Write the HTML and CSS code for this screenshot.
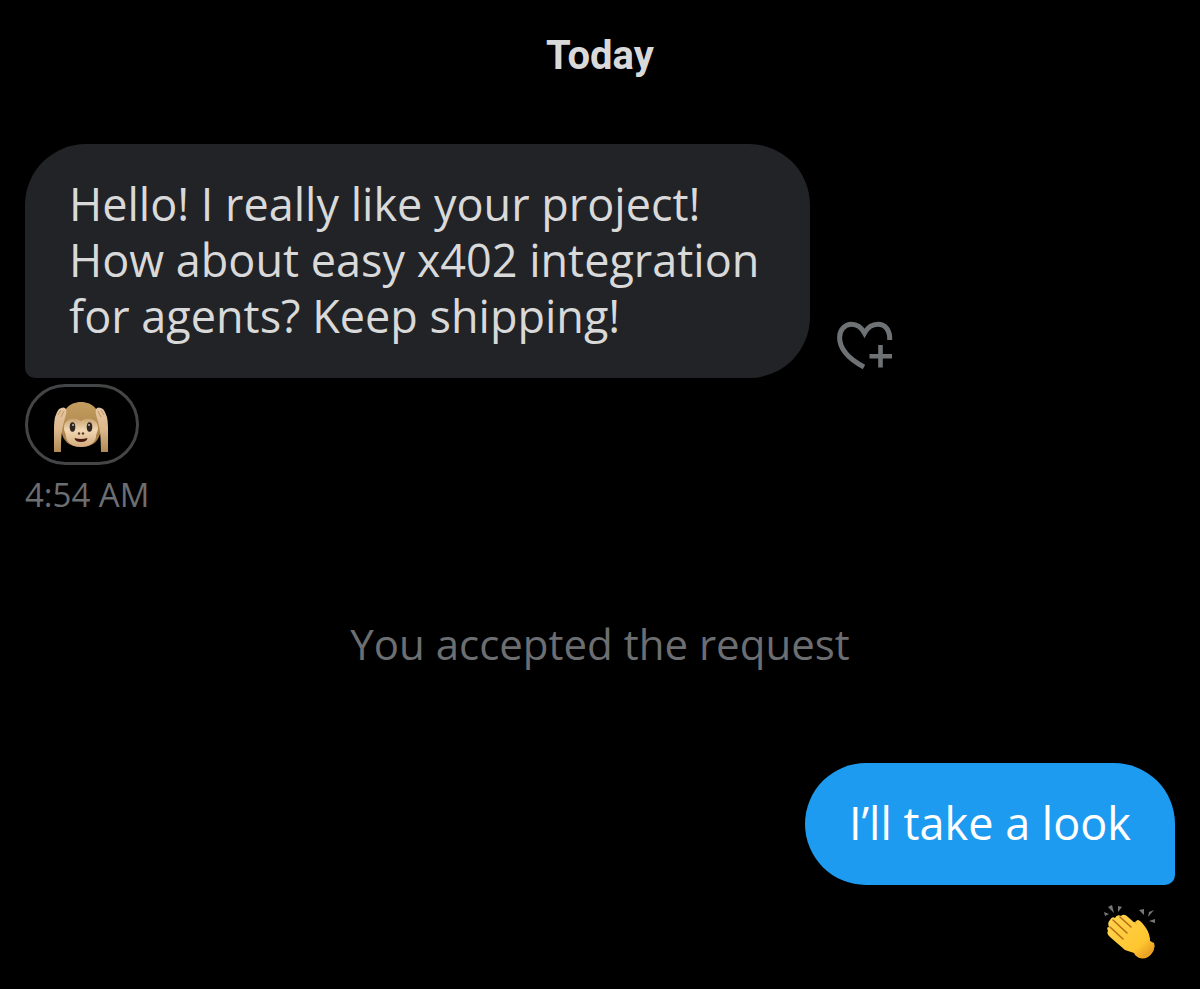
FILE: index.html
```html
<!DOCTYPE html>
<html lang="en">

<head>
<title>Messages</title>
<meta charset="UTF-8">
<meta name="viewport" content="width=device-width, initial-scale=1">
<link rel="stylesheet" href="styles.css">
</head>

<body>
<main class="chat">
  <h1 class="day">Today</h1>

  <section class="message received">
    <div class="row">
      <p class="bubble">Hello! I really like your project! How about easy x402 integration for agents? Keep shipping!</p>
      <button class="react" type="button" aria-label="Add reaction">
        <svg width="56" height="50" viewBox="0 0 56 50" fill="none" stroke="currentColor">
          <path stroke-width="5" d="M52.7 19C53.2 9 48 3.2 41 3.2C35 3.2 30.5 6.5 27.5 12C24.5 6.5 20 3.2 14.5 3.2C7.5 3.2 2.6 9 2.6 16.5C2.6 28 11 37.500 27 46"/>
          <path stroke-width="4.6" d="M43.5 24V46.5M32.5 35.3H55"/>
        </svg>
      </button>
    </div>
    <button class="pill" type="button" aria-label="Monkey reaction">
      <svg width="54" height="52" viewBox="0 0 54 52">
        <defs>
          <linearGradient id="fur" x1="0" y1="0" x2="0" y2="1">
            <stop offset="0" stop-color="#c39d60"/>
            <stop offset="1" stop-color="#a67c45"/>
          </linearGradient>
          <linearGradient id="arm" x1="0" y1="0" x2="0" y2="1">
            <stop offset="0" stop-color="#e6c7a4"/>
            <stop offset=".5" stop-color="#dcb98c"/>
            <stop offset="1" stop-color="#b08a55"/>
          </linearGradient>
          <linearGradient id="face" x1="0" y1="0" x2="0" y2="1">
            <stop offset="0" stop-color="#cba673"/>
            <stop offset=".4" stop-color="#f2d8b4"/>
            <stop offset="1" stop-color="#d3ab7d"/>
          </linearGradient>
        </defs>
        <path fill="url(#fur)" d="M27 0C39 0 47 9 47 22C47 32 45 38 39 42Q34 45 27 45T15 42C9 38 7 32 7 22C7 9 15 0 27 0Z"/>
        <path fill="url(#face)" d="M27 19C21 15 10 16 10 26C10 30 12 31 12 35C13 41 19 45 27 45S41 41 42 35C42 31 44 30 44 26C44 16 33 15 27 19Z"/>
        <ellipse cx="18.500" cy="25" rx="2.800" ry="4.800" fill="#2e2520"/>
        <ellipse cx="35.500" cy="25" rx="2.800" ry="4.800" fill="#2e2520"/>
        <circle cx="19" cy="23" r="1" fill="#bbb"/>
        <circle cx="35" cy="23" r="1" fill="#bbb"/>
        <circle cx="25" cy="31.500" r="1.200" fill="#5a3c26"/>
        <circle cx="29" cy="31.500" r="1.200" fill="#5a3c26"/>
        <path fill="#47180f" d="M20.500 36Q27 38 33.500 36Q33 40 27 40T20.500 36Z"/>
        <path fill="url(#arm)" d="M0 50V25Q0 13 5 7Q10 4 12 7Q13 10 11 16C9 23 7 30 7 50Z"/>
        <path fill="url(#arm)" d="M54 50V25Q54 13 49 7Q44 4 42 7Q41 10 43 16C45 23 47 30 47 50Z"/>
        <path fill="none" stroke="#bd9464" d="M4 13L7 8M7 15L10 9M50 13L47 8M47 15L44 9"/>
      </svg>
    </button>
    <time class="time">4:54 AM</time>
  </section>

  <p class="notice">You accepted the request</p>

  <section class="message sent">
    <p class="bubble">I’ll take a look</p>
    <button class="clap" type="button" aria-label="Clapping reaction">
      <svg width="54" height="54" viewBox="0 0 54 54">
        <defs>
          <linearGradient id="skin" x1="0" y1="0" x2="1" y2="1">
            <stop offset="0" stop-color="#ffd451"/>
            <stop offset=".7" stop-color="#ffc62f"/>
            <stop offset="1" stop-color="#dc8a1e"/>
          </linearGradient>
        </defs>
        <path fill="#777" d="M5 2L9 0L11 8ZM1 7L6 9L2 11ZM15 1L19 2L15 7ZM36 5L41 4L41 10ZM46 7L51 5L45 12ZM46 16L52 14L52 18Z"/>
        <path fill="#f3ad25" d="M23 18L32 17Q35 13 39 18L45 28L47 36L51 41Q52 47 45 52Q38 56 32 50Z"/>
        <path fill="url(#skin)" d="M7 15Q9 11 12 13Q14 9 18 11Q21 8 25 12L34 20Q32 16 35 15Q39 17 43 23Q47 29 47 36L51 38Q53 43 48 48Q42 54 36 52Q33 51 31 48L22 45L7 32Q3 28 5 26Q3 22 6 22Q4 18 7 15Z"/>
        <path fill="none" stroke="#b96e15" stroke-width="1.600" stroke-linecap="round" d="M17 12L28 22M10 15L24 28M7 22L20 34"/>
      </svg>
    </button>
  </section>
</main>
</body>
</html>
```
FILE: styles.css
```css
* {
  box-sizing: border-box;
}

body {
  margin: 0;
  background: #000;
  color: #d9d9d9;
  font-family: "Open Sans", "Noto Sans", sans-serif;
}

h1, p {
  margin: 0;
}

button {
  padding: 0;
  border: none;
  background: none;
  cursor: pointer;
}

svg {
  display: block;
}

.chat {
  display: flex;
  flex-direction: column;
  padding: 28px 25px;
}

.day {
  font-family: Roboto, sans-serif;
  font-size: 40px;
  line-height: 56px;
  font-weight: 700;
  text-align: center;
}

.message {
  display: flex;
  flex-direction: column;
}

.received {
  align-items: flex-start;
  margin-top: 60px;
}

.sent {
  align-items: flex-end;
  margin-top: 91px;
}

.row {
  display: flex;
  align-items: flex-end;
  gap: 27px;
}

.bubble {
  max-width: 785px;
  padding: 32px 44px 34px;
  border-radius: 61px;
  font-size: 45px;
  line-height: 56px;
}

.received .bubble {
  background: #212327;
  border-bottom-left-radius: 10px;
}

.sent .bubble {
  background: #1d9bf0;
  color: #fff;
  border-bottom-right-radius: 10px;
}

.react {
  margin-bottom: 7px;
  color: #6f7275;
}

.pill {
  margin-top: 6px;
  padding: 15px 28px 8px 26px;
  border: 3px solid #444547;
  border-radius: 41px;
}

.time {
  margin-top: 8px;
  color: #6c6e71;
  font-size: 33px;
  line-height: 44px;
}

.notice {
  margin-top: 99px;
  color: #6c6e71;
  font-size: 42px;
  line-height: 56px;
  text-align: center;
}

.clap {
  margin: 20px 18px 0 0;
}
```
